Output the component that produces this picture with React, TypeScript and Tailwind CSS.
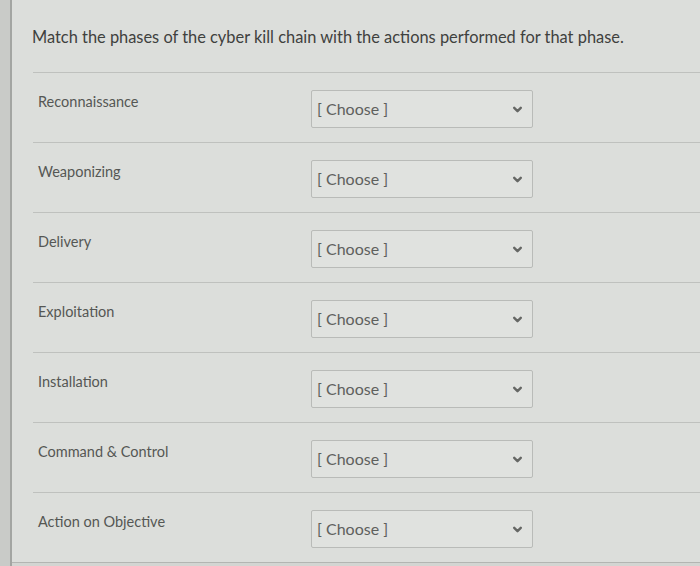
import React from "react";

const phases = [
  "Reconnaissance",
  "Weaponizing",
  "Delivery",
  "Exploitation",
  "Installation",
  "Command & Control",
  "Action on Objective",
];

function Chevron() {
  return (
    <svg className="w-[11px] h-[11px] text-[#656764]" viewBox="0 0 10 10" fill="none" stroke="currentColor">
      <path d="M2 3.5l3 3 3-3" strokeWidth={2.2} strokeLinecap="round" strokeLinejoin="round" />
    </svg>
  );
}

export default function App() {
  return (
    <div
      className="w-[700px] h-[566px] overflow-hidden flex bg-[#d3d5d2]"
      style={{ fontFamily: "Lato, 'Open Sans', sans-serif" }}
    >
      {/* left strip */}
      <div className="w-[12px] shrink-0 bg-[#c9cbc8] border-r-2 border-[#a3a5a2]" />
      <div className="flex-1 flex flex-col">
        <div className="h-[563px] bg-[#dcdedb] border-b border-[#b3b5b2] flex flex-col">
          <div className="h-[74px] pl-[20px] pt-[27px]">
            <h1 className="text-[16.4px] leading-[20px] text-[#3f413e]">
              Match the phases of the cyber kill chain with the actions performed for that phase.
            </h1>
          </div>
          <div className="ml-[21px] flex flex-col">
            {phases.map((p) => (
              <div key={p} className="h-[70px] border-t border-[#bfc1be] flex items-start pt-[17px]">
                <div className="w-[278px] pl-[5px] pt-[2px] text-[14.5px] leading-[20px] text-[#555754]">{p}</div>
                <div className="w-[222px] h-[38px] border border-[#b9bbb8] rounded-[2px] bg-[#e0e2df] flex items-center justify-between pl-[5px] pr-[9px]">
                  <span className="text-[16px] text-[#5e605d]">[ Choose ]</span>
                  <Chevron />
                </div>
              </div>
            ))}
          </div>
        </div>
      </div>
    </div>
  );
}
